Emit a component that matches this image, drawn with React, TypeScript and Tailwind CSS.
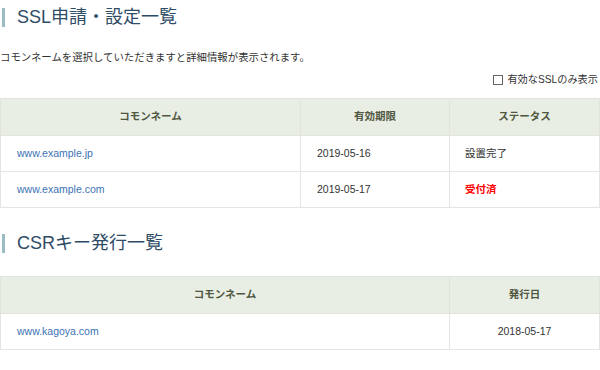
import React from 'react';

const font = "font-['Liberation_Sans','Noto_Sans_CJK_JP',sans-serif]";

const SectionTitle = ({ title, className }: { title: string; className?: string }) => (
  <div className={`flex items-center ${className ?? ''}`}>
    <div className="ml-[2px] w-[3px] h-[19px] bg-[#9cbcc4]" />
    <h2 className="ml-[12px] text-[18px] leading-[19px] text-[#2e4c66]">{title}</h2>
  </div>
);

const th = 'h-[37px] border border-[#e2e4df] bg-[#e9eee5] text-[10.5px] font-bold text-[#50573f] text-center';
const td = 'h-[36px] border border-[#e4e4e4] bg-white text-[10.5px] text-[#333]';

const sslRows = [
  { name: 'www.example.jp', limit: '2019-05-16', status: '設置完了', done: true },
  { name: 'www.example.com', limit: '2019-05-17', status: '受付済', done: false },
];

export default function App() {
  return (
    <div className={`w-[600px] h-[370px] bg-white overflow-hidden ${font}`}>
      <SectionTitle title="SSL申請・設定一覧" className="pt-[8px]" />

      <p className="mt-[24px] text-[10.4px] leading-[14px] text-[#333]">
        コモンネームを選択していただきますと詳細情報が表示されます。
      </p>

      <label className="mt-[8px] flex items-center justify-end gap-[4px] pr-[2px] text-[10.2px] leading-[14px] text-[#333]">
        <span className="w-[10px] h-[10px] border border-[#666] bg-white" />
        有効なSSLのみ表示
      </label>

      <table className="mt-[11px] w-[599px] table-fixed border-collapse">
        <colgroup>
          <col className="w-[300px]" />
          <col className="w-[149px]" />
          <col className="w-[150px]" />
        </colgroup>
        <thead>
          <tr>
            <th className={th}>コモンネーム</th>
            <th className={th}>有効期限</th>
            <th className={th}>ステータス</th>
          </tr>
        </thead>
        <tbody>
          {sslRows.map(r => (
            <tr key={r.name}>
              <td className={`${td} pl-[16px]`}>
                <a className="text-[#3b72b4]">{r.name}</a>
              </td>
              <td className={`${td} pl-[16px]`}>{r.limit}</td>
              <td className={`${td} pl-[15px]`}>
                {r.done ? r.status : <span className="font-bold text-[#f00]">{r.status}</span>}
              </td>
            </tr>
          ))}
        </tbody>
      </table>

      <SectionTitle title="CSRキー発行一覧" className="mt-[26px]" />

      <table className="mt-[23px] w-[599px] table-fixed border-collapse">
        <colgroup>
          <col className="w-[449px]" />
          <col className="w-[150px]" />
        </colgroup>
        <thead>
          <tr>
            <th className={th}>コモンネーム</th>
            <th className={th}>発行日</th>
          </tr>
        </thead>
        <tbody>
          <tr>
            <td className={`${td} pl-[16px]`}>
              <a className="text-[#3b72b4]">www.kagoya.com</a>
            </td>
            <td className={`${td} text-center`}>2018-05-17</td>
          </tr>
        </tbody>
      </table>
    </div>
  );
}
